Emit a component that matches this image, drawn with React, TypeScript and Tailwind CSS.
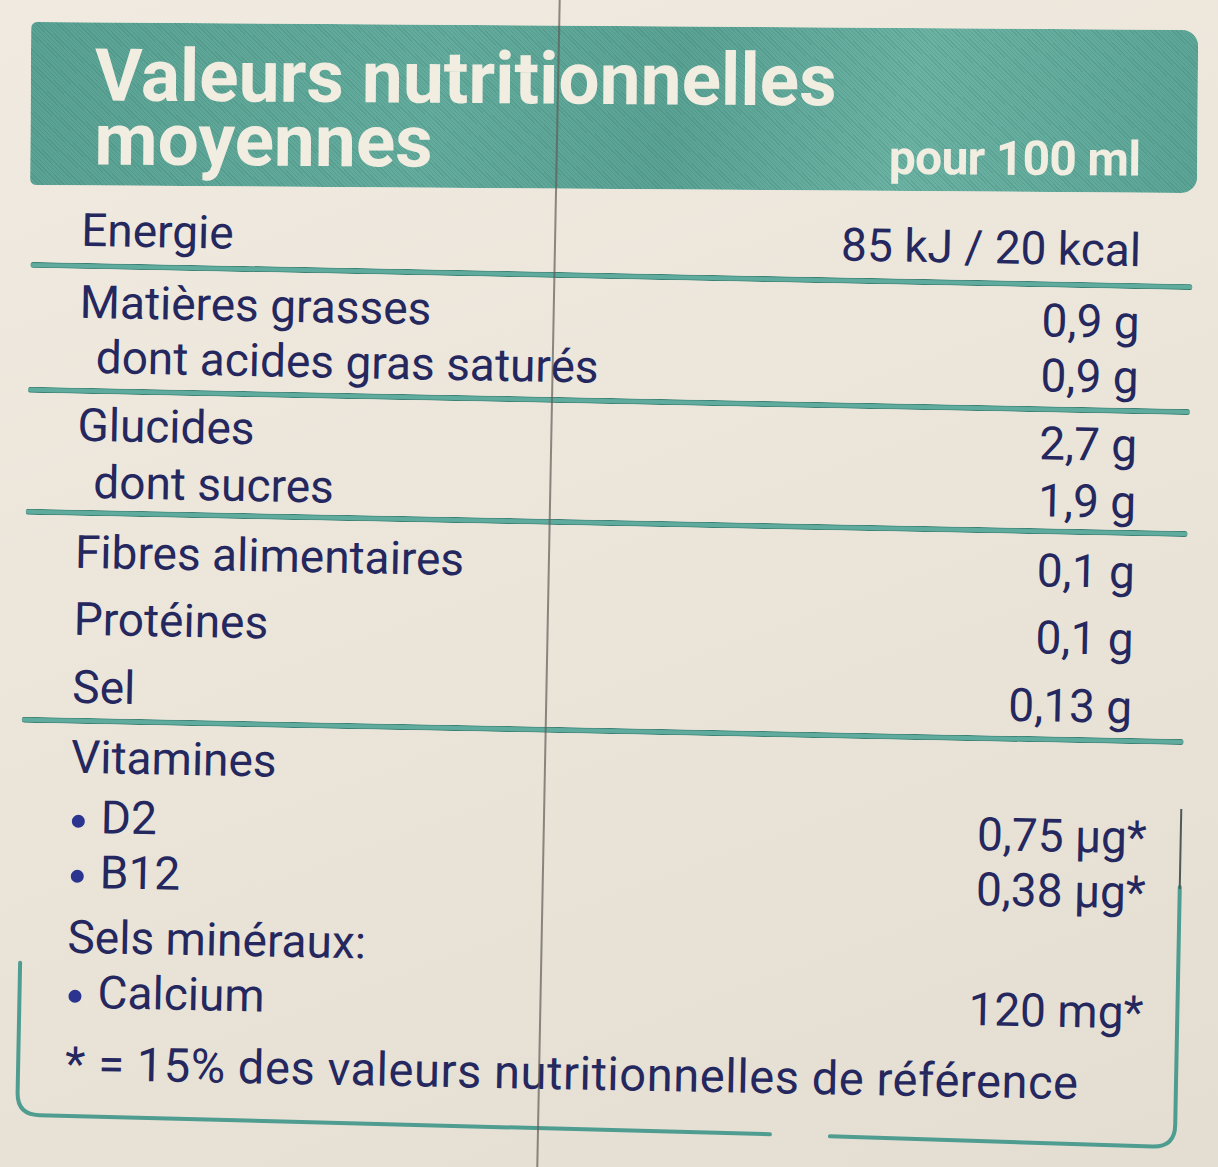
import { ReactNode } from "react";

interface RowProps {
  label: ReactNode;
  value?: ReactNode;
  className?: string;
}

const Row = ({ label, value, className = "" }: RowProps) => {
  return (
    <div className={`flex h-[46px] items-start justify-between leading-none ${className}`}>
      <span>{label}</span>
      {value && <span className="whitespace-nowrap">{value}</span>}
    </div>
  );
};

const Star = () => <span className="-mr-[17px]">*</span>;

const Bullet = ({ children }: { children: ReactNode }) => (
  <span className="flex items-center">
    <span className="ml-[2px] mr-[16px] mt-[8px] inline-block h-[13px] w-[13px] shrink-0 rounded-full bg-[#2b348e]" />
    {children}
  </span>
);

const Rule = ({ className = "" }: { className?: string }) => (
  <div className={`ml-[24px] h-[6px] w-[1162px] rounded-full border-y border-[#3a8074] bg-[#5fab9d] ${className}`} />
);

const App = () => {
  return (
    <div className="h-[1167px] w-[1218px] overflow-hidden bg-[linear-gradient(160deg,#f0eae0_0%,#ebe5da_45%,#e4ded2_100%)] font-['Roboto',sans-serif] text-[#25285f]">
      <div className="relative h-full w-full rotate-[1.1deg]">
        {/* bandeau titre */}
        <div className="ml-[21px] mt-[26px] flex h-[163px] w-[1167px] rotate-[-0.7deg] justify-between rounded-l-[6px] rounded-r-[16px] bg-[repeating-linear-gradient(45deg,rgba(28,92,80,0.16)_0px,rgba(28,92,80,0.16)_1px,transparent_1px,transparent_3px),linear-gradient(100deg,#5aa293_0%,#64ac9d_35%,#5aa294_55%,#6cb3a4_75%,#5ca596_100%)] pl-[64px] pr-[57px] font-bold text-[#f2ede1]">
          <h1 className="self-start pt-[21px] text-[73px] leading-[64px]">
            <span className="block">Valeurs nutritionnelles</span>
            <span className="block">moyennes</span>
          </h1>
          <span className="mb-[9px] self-end text-[48px] leading-none tracking-[-0.015em]">
            pour 100 ml
          </span>
        </div>

        {/* tableau */}
        <div className="mt-[28px] pl-[74px] pr-[84px] text-[46px]">
          <Row label="Energie" value="85 kJ / 20 kcal" />
        </div>
        <Rule className="mt-[10px]" />

        <div className="mt-[10px] pl-[74px] pr-[84px] text-[46px]">
          <Row label="Matières grasses" value="0,9 g" />
          <Row label={<span className="pl-[17px]">dont acides gras saturés</span>} value="0,9 g" className="mt-[9px]" />
        </div>
        <Rule className="mt-[8px]" />

        <div className="mt-[8px] pl-[74px] pr-[84px] text-[46px]">
          <Row label="Glucides" value="2,7 g" />
          <Row label={<span className="pl-[17px]">dont sucres</span>} value="1,9 g" className="mt-[11px]" />
        </div>
        <Rule className="mt-[5px]" />

        <div className="mt-[13px] pl-[74px] pr-[84px] text-[46px]">
          <Row label="Fibres alimentaires" value="0,1 g" />
          <Row label="Protéines" value="0,1 g" className="mt-[21px]" />
          <Row label="Sel" value="0,13 g" className="mt-[22px]" />
        </div>
        <Rule className="mt-[8px]" />

        <div className="mt-[10px] pl-[74px] pr-[84px] text-[46px]">
          <Row label="Vitamines" />
          <Row
            label={<Bullet>D2</Bullet>}
            value={
              <>
                0,75 µg
                <Star />
              </>
            }
            className="mt-[14px]"
          />
          <Row
            label={<Bullet>B12</Bullet>}
            value={
              <>
                0,38 µg
                <Star />
              </>
            }
            className="mt-[9px]"
          />
          <Row label="Sels minéraux:" className="mt-[19px]" />
          <Row
            label={<Bullet>Calcium</Bullet>}
            value={
              <>
                120 mg
                <Star />
              </>
            }
            className="mt-[9px]"
          />
          <p className="mt-[25px] whitespace-nowrap text-[47px] leading-none tracking-[0.012em]">
            * = 15% des valeurs nutritionnelles de référence
          </p>
        </div>

        {/* cadre du bas */}
        <svg className="pointer-events-none absolute left-0 top-0" width="1218" height="1167" fill="none">
          <path d="M27 948 L27 1078 Q27 1100 49 1100 L780 1105" stroke="#4f9c90" strokeWidth="4" strokeLinecap="round" />
          <path d="M840 1106 L1163 1110 Q1185 1110 1185 1088 L1185 850" stroke="#4f9c90" strokeWidth="4" strokeLinecap="round" />
          <path d="M1185 852 L1185 772" stroke="#4d5a56" strokeWidth="2" />
        </svg>

        {/* pli du carton */}
        <div className="pointer-events-none absolute bottom-[-40px] left-[547px] top-[-40px] w-[2px] bg-[#5f5c57]/70" />
      </div>
    </div>
  );
};

export default App;
